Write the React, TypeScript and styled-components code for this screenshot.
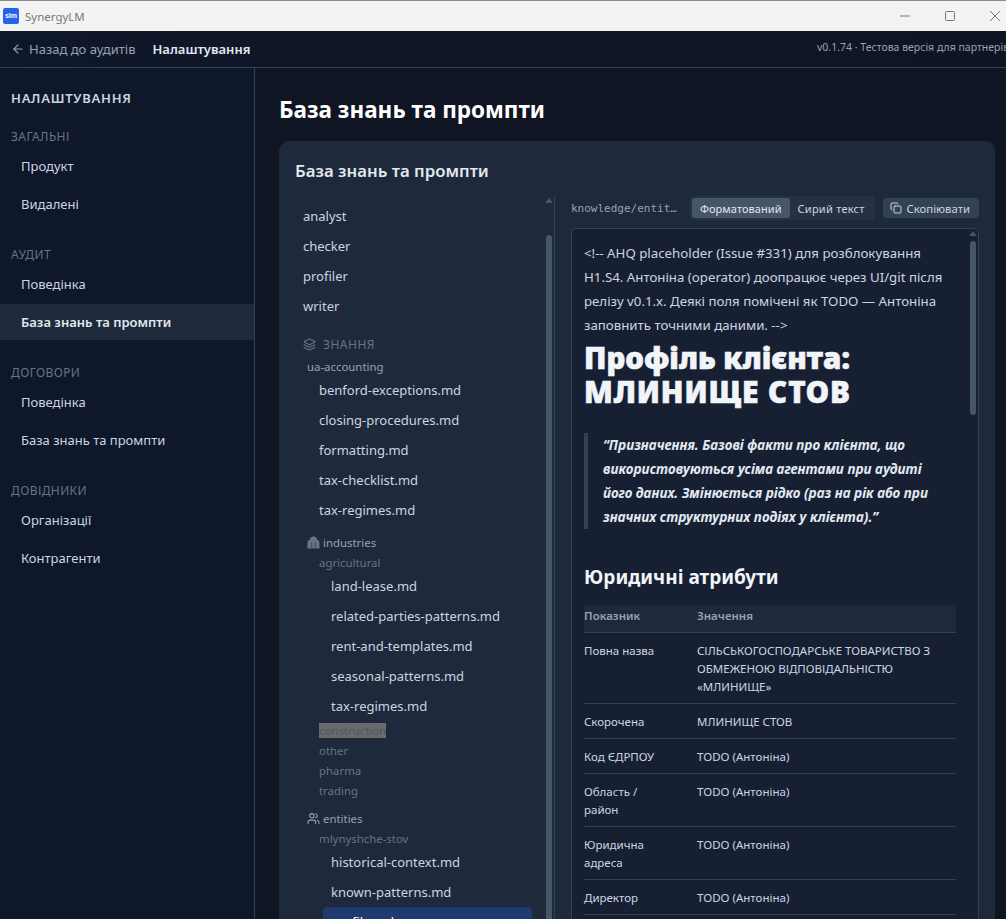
import React from "react";
import styled, { createGlobalStyle } from "styled-components";
import { ArrowLeft, Copy, Layers, Users } from "lucide-react";

const GlobalStyle = createGlobalStyle`
  html, body, #root { margin: 0; height: 100%; overflow: hidden; }
  body { font-family: "Noto Sans", "Open Sans", sans-serif; background: #0f172a; color: #cbd5e1; }
  * { box-sizing: border-box; }
`;

const nav = [
  { title: "ЗАГАЛЬНІ", items: ["Продукт", "Видалені"] },
  { title: "АУДИТ", items: ["Поведінка", "База знань та промпти"] },
  { title: "ДОГОВОРИ", items: ["Поведінка", "База знань та промпти"] },
  { title: "ДОВІДНИКИ", items: ["Організації", "Контрагенти"] },
];

const rows = [
  ["Повна назва", "СІЛЬСЬКОГОСПОДАРСЬКЕ ТОВАРИСТВО З ОБМЕЖЕНОЮ ВІДПОВІДАЛЬНІСТЮ «МЛИНИЩЕ»"],
  ["Скорочена", "МЛИНИЩЕ СТОВ"],
  ["Код ЄДРПОУ", "TODO (Антоніна)"],
  ["Область / район", "TODO (Антоніна)"],
  ["Юридична адреса", "TODO (Антоніна)"],
  ["Директор", "TODO (Антоніна)"],
];

// no lucide icon has this shape, so it is drawn by hand
const IndustriesIcon = () => (
  <svg width="13" height="13" viewBox="0 0 13 13">
    <path d="M.5 12.5V6.5C.5 5 1.8 4 3 3.8V3C3 1.8 4.5.5 6.5.5S10 1.8 10 3v.8c1.2.2 2.5 1.2 2.5 2.7v6z" fill="#64748b" />
    <path d="M4.7 6v6.5M8.3 6v6.5" stroke="#334155" strokeWidth="0.8" />
  </svg>
);

export default function App() {
  return (
    <Window>
      <GlobalStyle />
      <TitleBar>
        <Logo>slm</Logo>
        <AppName>SynergyLM</AppName>
        <WinControls>
          <svg width="12" height="12" viewBox="0 0 12 12"><path d="M1 6h10" stroke="#777" /></svg>
          <svg width="12" height="12" viewBox="0 0 12 12"><rect x="1.5" y="1.5" width="9" height="9" rx="1" fill="none" stroke="#777" /></svg>
          <svg width="12" height="12" viewBox="0 0 12 12"><path d="M1 1l10 10M11 1L1 11" stroke="#777" /></svg>
        </WinControls>
      </TitleBar>
      <TopBar>
        <BackLink><ArrowLeft size={14} />Назад до аудитів</BackLink>
        <Crumb>Налаштування</Crumb>
        <Version>v0.1.74 · Тестова версія для партнерів</Version>
      </TopBar>
      <Body>
        <Sidebar>
          <SideTitle>НАЛАШТУВАННЯ</SideTitle>
          {nav.map((group, g) => (
            <NavGroup key={group.title}>
              <NavTitle>{group.title}</NavTitle>
              {group.items.map((item, i) => (
                <NavItem key={item} $active={g === 1 && i === 1}>{item}</NavItem>
              ))}
            </NavGroup>
          ))}
        </Sidebar>
        <Main>
          <PageTitle>База знань та промпти</PageTitle>
          <Card>
            <CardTitle>База знань та промпти</CardTitle>
            <Split>
              <TreePane>
                <Tree>
                  <FileRow>analyst</FileRow>
                  <FileRow>checker</FileRow>
                  <FileRow>profiler</FileRow>
                  <FileRow>writer</FileRow>
                  <SectionHead><Layers size={13} />ЗНАННЯ</SectionHead>
                  <GroupLabel>ua-accounting</GroupLabel>
                  <FileRow $depth={1}>benford-exceptions.md</FileRow>
                  <FileRow $depth={1}>closing-procedures.md</FileRow>
                  <FileRow $depth={1}>formatting.md</FileRow>
                  <FileRow $depth={1}>tax-checklist.md</FileRow>
                  <FileRow $depth={1}>tax-regimes.md</FileRow>
                  <FolderHead><IndustriesIcon />industries</FolderHead>
                  <SubLabel $open>agricultural</SubLabel>
                  <FileRow $depth={2}>land-lease.md</FileRow>
                  <FileRow $depth={2}>related-parties-patterns.md</FileRow>
                  <FileRow $depth={2}>rent-and-templates.md</FileRow>
                  <FileRow $depth={2}>seasonal-patterns.md</FileRow>
                  <FileRow $depth={2}>tax-regimes.md</FileRow>
                  <SubLabel><Marked>construction</Marked></SubLabel>
                  <SubLabel>other</SubLabel>
                  <SubLabel>pharma</SubLabel>
                  <SubLabel>trading</SubLabel>
                  <FolderHead><Users size={13} />entities</FolderHead>
                  <SubLabel $open>mlynyshche-stov</SubLabel>
                  <FileRow $depth={2}>historical-context.md</FileRow>
                  <FileRow $depth={2}>known-patterns.md</FileRow>
                  <FileRow $depth={2} $selected>profile.md</FileRow>
                </Tree>
                <Scrollbar $offset={32} $thumb={800} />
              </TreePane>
              <Viewer>
                <ViewerBar>
                  <FilePath>knowledge/entit…</FilePath>
                  <Segmented>
                    <SegButton $on>Форматований</SegButton>
                    <SegButton>Сирий текст</SegButton>
                  </Segmented>
                  <CopyButton><Copy size={12} />Скопіювати</CopyButton>
                </ViewerBar>
                <Doc>
                  <DocBody>
                    <Comment>&lt;!-- AHQ placeholder (Issue #331) для розблокування H1.S4. Антоніна (operator) доопрацює через UI/git після релізу v0.1.x. Деякі поля помічені як TODO — Антоніна заповнить точними даними. --&gt;</Comment>
                    <H1>Профіль клієнта: <Caps>МЛИНИЩЕ СТОВ</Caps></H1>
                    <Quote>“Призначення. Базові факти про клієнта, що використовуються усіма агентами при аудиті його даних. Змінюється рідко (раз на рік або при значних структурних подіях у клієнта).”</Quote>
                    <H2>Юридичні атрибути</H2>
                    <Table>
                      <thead>
                        <tr><Th>Показник</Th><Th>Значення</Th></tr>
                      </thead>
                      <tbody>
                        {rows.map(([k, v]) => (
                          <tr key={k}><KeyCell>{k}</KeyCell><Td>{v}</Td></tr>
                        ))}
                      </tbody>
                    </Table>
                  </DocBody>
                  <DocScroll $offset={5} $thumb={174} />
                </Doc>
              </Viewer>
            </Split>
          </Card>
        </Main>
      </Body>
    </Window>
  );
}

const Window = styled.div`
  height: 919px;
  display: flex;
  flex-direction: column;
  overflow: hidden;
`;

const TitleBar = styled.div`
  height: 31px;
  flex: none;
  background: #f3f3f3;
  border-top: 1px solid #8a8a8a;
  display: flex;
  align-items: center;
  padding-left: 3px;
  color: #777;
  font-size: 11.5px;
`;

const Logo = styled.div`
  width: 16px;
  height: 16px;
  background: #2563eb;
  color: #fff;
  border-radius: 2px;
  font: 700 7px/16px "Liberation Sans", sans-serif;
  text-align: center;
`;

const AppName = styled.span`
  margin-left: 6px;
`;

const WinControls = styled.div`
  margin-left: auto;
  display: flex;
  gap: 33px;
  padding-right: 5px;
`;

const TopBar = styled.header`
  height: 37px;
  flex: none;
  display: flex;
  align-items: center;
  padding: 0 0 0 11px;
  background: linear-gradient(90deg, #0f172a, #0e1522);
  border-bottom: 1px solid #334155;
  white-space: nowrap;
  overflow: hidden;
`;

const BackLink = styled.span`
  display: inline-flex;
  align-items: center;
  gap: 4px;
  font-size: 13px;
  color: #94a3b8;
`;

const Crumb = styled.span`
  margin-left: 17px;
  font-size: 13px;
  font-weight: 600;
  color: #e2e8f0;
`;

const Version = styled.span`
  margin-left: auto;
  margin-bottom: 4px;
  font-size: 10.5px;
  color: #94a3b8;
  width: 189px;
  flex: none;
`;

const Body = styled.div`
  flex: 1;
  min-height: 0;
  display: flex;
`;

const Sidebar = styled.aside`
  width: 255px;
  flex: none;
  background: #0f172a;
  border-right: 1px solid #334155;
  padding-top: 20px;
`;

const SideTitle = styled.div`
  padding-left: 11px;
  font-size: 13px;
  line-height: 20px;
  font-weight: 600;
  letter-spacing: 0.75px;
  color: #cbd5e1;
`;

const NavGroup = styled.div`
  margin-top: 18px;
  & + & { margin-top: 22px; }
`;

const NavTitle = styled.div`
  height: 20px;
  padding: 2px 0 0 11px;
  font-size: 12px;
  line-height: 18px;
  letter-spacing: 0.4px;
  color: #64748b;
`;

const NavItem = styled.div<{ $active?: boolean }>`
  height: 36px;
  margin-top: 2px;
  display: flex;
  align-items: center;
  padding-left: 21px;
  font-size: 13px;
  font-weight: ${(p) => (p.$active ? 600 : 400)};
  color: ${(p) => (p.$active ? "#e2e8f0" : "#cbd5e1")};
  background: ${(p) => (p.$active ? "#1e293b" : "transparent")};
`;

const Main = styled.main`
  flex: 1;
  min-width: 0;
  padding: 26px 11px 0 24px;
  background: #0f1522;
  overflow: hidden;
`;

const PageTitle = styled.h1`
  margin: 0 0 15px;
  font-size: 22.5px;
  line-height: 32px;
  font-weight: 700;
  color: #fff;
`;

const Card = styled.section`
  background: #1e293b;
  border-radius: 10px;
  padding: 19px 16px 0;
  height: 840px;
`;

const CardTitle = styled.h2`
  margin: 0 0 14px;
  font-size: 16.8px;
  line-height: 22px;
  font-weight: 600;
  color: #e2e8f0;
`;

const Split = styled.div`
  display: flex;
  height: 760px;
`;

const TreePane = styled.div`
  width: 260px;
  flex: none;
  display: flex;
  border-right: 1px solid #334155;
  padding-right: 1px;
`;

const Tree = styled.div`
  flex: 1;
  min-width: 0;
  padding: 5px 13px 0 0;
  overflow: hidden;
`;

const FileRow = styled.div<{ $depth?: number; $selected?: boolean }>`
  height: 30px;
  display: flex;
  align-items: center;
  padding-left: 8px;
  margin-left: ${(p) => [0, 16, 28][p.$depth ?? 0]}px;
  font-size: 13px;
  color: ${(p) => (p.$selected ? "#fff" : "#cbd5e1")};
  background: ${(p) => (p.$selected ? "#1e3a6e" : "transparent")};
  border-radius: 4px;
`;

const SectionHead = styled.div`
  margin-top: 13px;
  padding-left: 8px;
  height: 20px;
  display: flex;
  align-items: center;
  gap: 7px;
  font-size: 12px;
  letter-spacing: 0.5px;
  color: #64748b;
  svg { color: #64748b; }
`;

const GroupLabel = styled.div`
  margin-top: 5px;
  padding-left: 12px;
  height: 16px;
  line-height: 16px;
  font-size: 11.4px;
  color: #94a3b8;
`;

const FolderHead = styled.div`
  margin-top: 7px;
  padding-left: 12px;
  height: 21px;
  display: flex;
  align-items: center;
  gap: 3px;
  font-size: 11.4px;
  color: #94a3b8;
  svg { color: #94a3b8; }
`;

const SubLabel = styled.div<{ $open?: boolean }>`
  padding-left: 24px;
  height: ${(p) => (p.$open ? 18 : 20)}px;
  line-height: 20px;
  font-size: 11.4px;
  color: #64748b;
`;

const Marked = styled.span`
  background: #6b6b6b;
  color: #475569;
`;

const Scrollbar = styled.div<{ $offset: number; $thumb: number }>`
  width: 8px;
  flex: none;
  &::before {
    content: "";
    display: block;
    margin: 2px auto 0;
    width: 0;
    height: 0;
    border: 4px solid transparent;
    border-top: 0;
    border-bottom: 5px solid #475569;
  }
  &::after {
    content: "";
    display: block;
    margin-top: ${(p) => p.$offset}px;
    height: ${(p) => p.$thumb}px;
    border-radius: 3px;
    background: #475569;
    width: 6px;
    margin-left: 1px;
  }
`;

const DocScroll = styled(Scrollbar)`
  margin-right: 1px;
`;

const Viewer = styled.div`
  flex: 1;
  min-width: 0;
  padding-left: 16px;
  display: flex;
  flex-direction: column;
`;

const ViewerBar = styled.div`
  display: flex;
  align-items: center;
  height: 24px;
  margin-bottom: 8px;
`;

const FilePath = styled.div`
  width: 108px;
  flex: none;
  font: 11px "DejaVu Sans Mono", monospace;
  color: #94a3b8;
  white-space: nowrap;
`;

const Segmented = styled.div`
  margin-left: 11px;
  display: flex;
  background: #263244;
  border-radius: 4px;
  padding: 2px;
`;

const SegButton = styled.div<{ $on?: boolean }>`
  height: 20px;
  padding: 0 8px;
  display: flex;
  align-items: center;
  font-size: 11px;
  letter-spacing: ${(p) => (p.$on ? 0.05 : 0.25)}px;
  border-radius: 3px;
  color: ${(p) => (p.$on ? "#e2e8f0" : "#cbd5e1")};
  background: ${(p) => (p.$on ? "#475569" : "transparent")};
`;

const CopyButton = styled.div`
  margin-left: 8px;
  height: 20px;
  width: 96px;
  padding: 0 8px 0 7px;
  display: flex;
  align-items: center;
  gap: 5px;
  font-size: 11.3px;
  background: #334155;
  border-radius: 4px;
  color: #cbd5e1;
  svg { flex: none; }
`;

const Doc = styled.div`
  width: 408px;
  flex: 1;
  min-height: 0;
  display: flex;
  background: #172033;
  border: 1px solid #334155;
  border-radius: 4px;
  overflow: hidden;
`;

const DocBody = styled.div`
  flex: 1;
  min-width: 0;
  padding: 12px 13px 0 12px;
  overflow: hidden;
`;

const Comment = styled.p`
  margin: 0;
  font-size: 13.25px;
  line-height: 24px;
  color: #cbd5e1;
`;

const H1 = styled.h1`
  margin: 4px 0 24px;
  font-size: 29.5px;
  line-height: 34px;
  font-weight: 900;
  color: #f1f5f9;
  -webkit-text-stroke: 0.6px #f1f5f9;
`;

const Caps = styled.span`
  letter-spacing: 0.9px;
`;

const Quote = styled.blockquote`
  margin: 0 0 35px;
  padding: 0 10px 0 15px;
  border-left: 4px solid #334155;
  font-size: 13.5px;
  line-height: 24px;
  font-weight: 700;
  font-style: italic;
  color: #e2e8f0;
`;

const H2 = styled.h2`
  margin: 0 0 15px;
  font-size: 19px;
  line-height: 26px;
  font-weight: 700;
  color: #f1f5f9;
`;

const Table = styled.table`
  width: 100%;
  border-collapse: collapse;
  font-size: 11.5px;
  line-height: 18px;
`;

const Th = styled.th`
  text-align: left;
  padding: 1px 0 6px;
  height: 27px;
  background: #1e293b;
  font-weight: 600;
  color: #94a3b8;
  border-bottom: 1px solid #334155;
  &:first-child { width: 113px; }
`;

const Td = styled.td`
  padding: 9px 12px 7px 0;
  vertical-align: top;
  color: #cbd5e1;
  border-bottom: 1px solid #334155;
`;

const KeyCell = styled(Td)`
  padding-right: 24px;
`;
